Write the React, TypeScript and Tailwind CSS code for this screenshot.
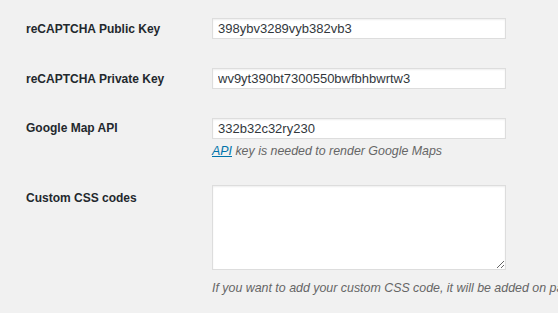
import React from "react";

const inputCls =
  "block w-[294px] h-[21px] bg-white border border-[#dddddd] shadow-[inset_0_1px_2px_rgba(0,0,0,0.07)] px-[5px] text-[13px] text-[#32373c] outline-none";

const labelCls = "w-[212px] shrink-0 pl-[26px] text-[12px] font-bold whitespace-nowrap";

export default function App() {
  return (
    <div
      className="w-[558px] h-[313px] overflow-hidden bg-[#f1f1f1] text-[#23282d] pt-[18px]"
      style={{ fontFamily: '"Liberation Sans", Arial, sans-serif' }}
    >
      {/* Public key */}
      <div className="flex items-center">
        <label className={labelCls}>reCAPTCHA Public Key</label>
        <input className={inputCls} defaultValue="398ybv3289vyb382vb3" />
      </div>

      {/* Private key */}
      <div className="flex items-center mt-[29px]">
        <label className={labelCls}>reCAPTCHA Private Key</label>
        <input className={inputCls} defaultValue="wv9yt390bt7300550bwfbhbwrtw3" />
      </div>

      {/* Google map */}
      <div className="flex mt-[29px]">
        <label className={`${labelCls} leading-[21px]`}>Google Map API</label>
        <div>
          <input className={inputCls} defaultValue="332b32c32ry230" />
          <p className="mt-[4px] text-[12.4px] italic text-[#666666] leading-[16px] whitespace-nowrap">
            <a className="text-[#0073aa] underline">API</a> key is needed to render Google Maps
          </p>
        </div>
      </div>

      {/* Custom css */}
      <div className="flex mt-[26px]">
        <label className={`${labelCls} pt-[5px] leading-[16px]`}>Custom CSS codes</label>
        <div>
          <textarea className="block w-[294px] h-[85px] bg-white border border-[#dddddd] shadow-[inset_0_1px_2px_rgba(0,0,0,0.07)] outline-none" />
          <p className="mt-[10px] text-[12.4px] italic text-[#666666] leading-[16px] whitespace-nowrap">
            If you want to add your custom CSS code, it will be added on page header
          </p>
        </div>
      </div>
    </div>
  );
}
